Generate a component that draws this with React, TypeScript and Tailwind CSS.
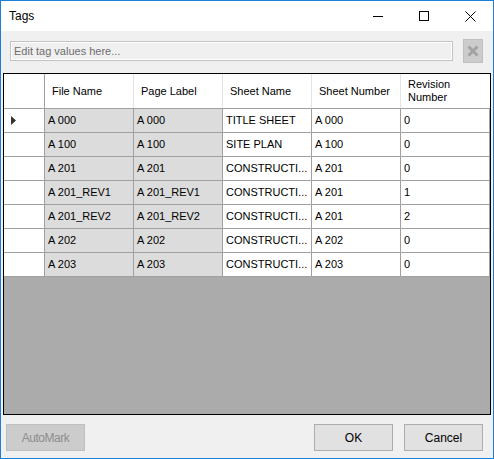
const rows = [
  { file: 'A 000', page: 'A 000', sheet: 'TITLE SHEET', num: 'A 000', rev: '0' },
  { file: 'A 100', page: 'A 100', sheet: 'SITE PLAN', num: 'A 100', rev: '0' },
  { file: 'A 201', page: 'A 201', sheet: 'CONSTRUCTI...', num: 'A 201', rev: '0' },
  { file: 'A 201_REV1', page: 'A 201_REV1', sheet: 'CONSTRUCTI...', num: 'A 201', rev: '1' },
  { file: 'A 201_REV2', page: 'A 201_REV2', sheet: 'CONSTRUCTI...', num: 'A 201', rev: '2' },
  { file: 'A 202', page: 'A 202', sheet: 'CONSTRUCTI...', num: 'A 202', rev: '0' },
  { file: 'A 203', page: 'A 203', sheet: 'CONSTRUCTI...', num: 'A 203', rev: '0' },
]

const headers = ['File Name', 'Page Label', 'Sheet Name', 'Sheet Number']

export default function App() {
  return (
    <div
      className="flex h-[459px] w-[494px] flex-col border border-[#1c7fd6] bg-[#f0f0f0] text-black"
      style={{ fontFamily: '"Liberation Sans", Arial, sans-serif' }}
    >
      {/* title bar */}
      <div className="flex h-[30px] shrink-0 items-center bg-white">
        <span className="flex-1 pl-[8px] text-[12px]">Tags</span>
        <div className="flex h-full w-[46px] items-center justify-center">
          <div className="h-px w-[10px] bg-black" />
        </div>
        <div className="flex h-full w-[46px] items-center justify-center">
          <div className="h-[10px] w-[10px] border border-black" />
        </div>
        <div className="flex h-full w-[46px] items-center justify-center">
          <svg width="11" height="11" viewBox="0 0 11 11">
            <path d="M0.5 0.5 L10.5 10.5 M10.5 0.5 L0.5 10.5" stroke="#000" strokeWidth="1" />
          </svg>
        </div>
      </div>

      {/* tag value editor */}
      <div className="ml-[9px] mr-[10px] mt-[8px] flex h-[24px] shrink-0 items-center gap-[10px]">
        <div className="flex h-[20px] flex-1 items-center border border-[#c4c4c4] bg-[#f0f0f0] pl-[3px] text-[11px] text-[#6d6d6d] shadow-[inset_0_0_0_1px_#ffffff]">
          Edit tag values here...
        </div>
        <div className="flex h-[24px] w-[20px] items-center justify-center border border-[#bfbfbf] bg-[#cccccc]">
          <svg width="12" height="12" viewBox="0 0 12 12">
            <path d="M1.5 1.5 L10.5 10.5 M10.5 1.5 L1.5 10.5" stroke="#a3a3a3" strokeWidth="3" />
          </svg>
        </div>
      </div>

      {/* grid */}
      <div className="mx-[2px] mt-[10px] flex h-[342px] shrink-0 flex-col overflow-hidden border border-black bg-[#ababab] text-[11px]">
        <div className="flex h-[35px] shrink-0 border-b border-[#a0a0a0] bg-white">
          <div className="w-[41px] border-r border-[#a0a0a0]" />
          {headers.map((h) => (
            <div key={h} className="flex w-[89px] items-center border-r border-[#e3e3e3] pl-[7px]">
              {h}
            </div>
          ))}
          <div className="flex w-[89px] items-center pl-[7px] leading-[13px]">
            Revision
            <br />
            Number
          </div>
        </div>
        {rows.map((r, i) => (
          <div key={i} className="flex h-[24px] shrink-0">
            <div className="flex w-[41px] items-center border-b border-r border-[#a0a0a0] bg-white pl-[7px]">
              {i === 0 && (
                <svg width="5" height="9" viewBox="0 0 5 9">
                  <path d="M0 0 L5 4.5 L0 9 Z" fill="#333" />
                </svg>
              )}
            </div>
            <div className="flex w-[89px] items-center border-b border-r border-[#a0a0a0] bg-[#dcdcdc] pl-[3px]">{r.file}</div>
            <div className="flex w-[89px] items-center border-b border-r border-[#a0a0a0] bg-[#dcdcdc] pl-[3px]">{r.page}</div>
            <div className="flex w-[89px] items-center border-b border-r border-[#a0a0a0] bg-white pl-[3px]">{r.sheet}</div>
            <div className="flex w-[89px] items-center border-b border-r border-[#a0a0a0] bg-white pl-[3px]">{r.num}</div>
            <div className="flex w-[89px] items-center border-b border-r border-[#a0a0a0] bg-white pl-[3px]">{r.rev}</div>
          </div>
        ))}
      </div>

      {/* buttons */}
      <div className="ml-[5px] mr-[10px] mt-[9px] flex h-[27px] shrink-0 items-stretch text-[12px]">
        <button className="w-[79px] border border-[#bfbfbf] bg-[#cccccc] tracking-[-0.5px] text-[#8c8c8c]">AutoMark</button>
        <div className="flex-1" />
        <button className="w-[79px] border border-[#adadad] bg-[#e1e1e1]">OK</button>
        <button className="ml-[11px] w-[79px] border border-[#adadad] bg-[#e1e1e1]">Cancel</button>
      </div>
    </div>
  )
}
